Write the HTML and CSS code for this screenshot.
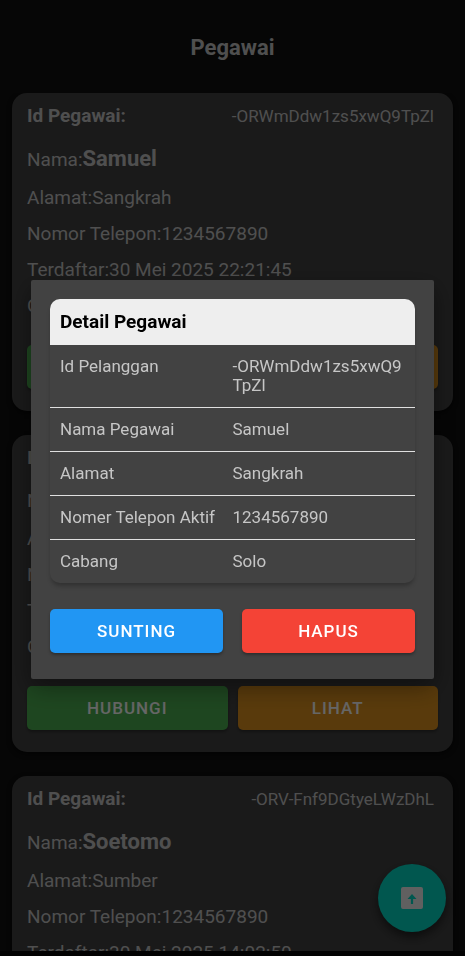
FILE: index.html
```html
<!DOCTYPE html>
<html lang="id">
<head>
<meta charset="utf-8">
<meta name="viewport" content="width=device-width, initial-scale=1">
<title>Pegawai</title>
<link rel="stylesheet" href="styles.css">
</head>
<body>
<div class="app">
  <header class="topbar"><h1 class="topbar-title">Pegawai</h1></header>
  <main class="list">
    <article class="card">
      <div class="card-head"><strong>Id Pegawai:</strong><span class="card-id">-ORWmDdw1zs5xwQ9TpZl</span></div>
      <p class="row row-name">Nama:<strong class="name">Samuel</strong></p>
      <p class="row">Alamat:Sangkrah</p>
      <p class="row">Nomor Telepon:1234567890</p>
      <p class="row">Terdaftar:30 Mei 2025 22:21:45</p>
      <p class="row">Cabang:Solo</p>
      <div class="actions card-actions">
        <button class="btn btn-call" type="button">HUBUNGI</button>
        <button class="btn btn-view" type="button">LIHAT</button>
      </div>
    </article>
    <article class="card">
      <div class="card-head"><strong>Id Pegawai:</strong></div>
      <p class="row row-name">Nama:</p>
      <p class="row">Alamat:</p>
      <p class="row">Nomor Telepon:</p>
      <p class="row">Terdaftar:</p>
      <p class="row">Cabang:</p>
      <div class="actions card-actions">
        <button class="btn btn-call" type="button">HUBUNGI</button>
        <button class="btn btn-view" type="button">LIHAT</button>
      </div>
    </article>
    <article class="card">
      <div class="card-head"><strong>Id Pegawai:</strong><span class="card-id">-ORV-Fnf9DGtyeLWzDhL</span></div>
      <p class="row row-name">Nama:<strong class="name">Soetomo</strong></p>
      <p class="row">Alamat:Sumber</p>
      <p class="row">Nomor Telepon:1234567890</p>
      <p class="row">Terdaftar:30 Mei 2025 14:02:50</p>
    </article>
  </main>
  <div class="navbar"></div>
  <button class="fab" type="button" aria-label="Tambah pegawai">
    <svg class="fab-icon" viewBox="0 0 22 22" aria-hidden="true">
      <path fill="currentColor" fill-rule="evenodd" d="M2 0H20A2 2 0 0 1 22 2V20A2 2 0 0 1 20 22H2A2 2 0 0 1 0 20V2A2 2 0 0 1 2 0ZM11 7L6.500 12H9.900V17H12.100V12H15.500Z"/>
    </svg>
  </button>
</div>
<div class="scrim">
  <section class="dialog" role="dialog" aria-modal="true" aria-labelledby="dialog-title">
    <div class="detail">
      <h2 class="detail-title" id="dialog-title">Detail Pegawai</h2>
      <table class="detail-table">
        <tr><th scope="row">Id Pelanggan</th><td class="code">-ORWmDdw1zs5xwQ9TpZl</td></tr>
        <tr><th scope="row">Nama Pegawai</th><td>Samuel</td></tr>
        <tr><th scope="row">Alamat</th><td>Sangkrah</td></tr>
        <tr><th scope="row">Nomer Telepon Aktif</th><td>1234567890</td></tr>
        <tr><th scope="row">Cabang</th><td>Solo</td></tr>
      </table>
    </div>
    <div class="actions dialog-actions">
      <button class="btn btn-edit" type="button">SUNTING</button>
      <button class="btn btn-delete" type="button">HAPUS</button>
    </div>
  </section>
</div>
</body>
</html>
```
FILE: styles.css
```css
* { box-sizing: border-box; }
body {
  margin: 0;
  background: #0f0f0f;
  color: #c6c6c6;
  font-family: Roboto, "Liberation Sans", sans-serif;
  font-size: 19px;
}
h1, h2, p { margin: 0; }
.app {
  position: relative;
  display: flex;
  flex-direction: column;
  height: 100vh;
}
.topbar {
  flex: none;
  padding: 34px 12px 31px;
  text-align: center;
}
.topbar-title { font-size: 22px; line-height: 28px; font-weight: 700; }
.list {
  flex: 1;
  min-height: 0;
  overflow: hidden;
  padding: 0 12px;
}
.card {
  margin-bottom: 24px;
  padding: 11px 15px 22px;
  border-radius: 15px;
  background: #424242;
  box-shadow: 0 2px 5px rgba(0, 0, 0, 0.6);
}
.card-head {
  display: flex;
  justify-content: space-between;
  align-items: center;
  padding-right: 4px;
  line-height: 24px;
}
.card-id { font-size: 17px; }
.row { margin-top: 12px; line-height: 24px; }
.row-name { margin-top: 17px; line-height: 28px; }
.name { font-size: 22px; }
.actions { display: grid; grid-template-columns: 1fr 1fr; gap: 10px; }
.card-actions { margin-top: 27px; }
.btn {
  height: 44px;
  padding: 0;
  border: 0;
  border-radius: 5px;
  color: #fff;
  font-family: inherit;
  font-size: 17px;
  font-weight: 500;
  letter-spacing: 1px;
  box-shadow: 0 2px 3px rgba(0, 0, 0, 0.3);
}
.btn-call { background: #4caf50; }
.btn-view { background: #de921e; }
.btn-edit { background: #2196f3; }
.btn-delete { background: #f44336; }
.navbar { flex: none; height: 5px; background: #050505; }
.fab {
  position: absolute;
  right: 19px;
  bottom: 24px;
  display: grid;
  place-items: center;
  width: 68px;
  height: 68px;
  padding: 0;
  border: 0;
  border-radius: 50%;
  background: #03dac5;
  color: #f0f0f0;
  box-shadow: 0 5px 10px rgba(0, 0, 0, 0.5);
}
.fab-icon { width: 22px; height: 22px; }
.scrim {
  position: fixed;
  inset: 0;
  display: grid;
  align-items: center;
  padding: 3px 31px 0;
  background: rgba(0, 0, 0, 0.6);
}
.dialog {
  padding: 19px 19px 26px;
  border-radius: 2px;
  background: #424242;
  box-shadow: 0 8px 24px rgba(0, 0, 0, 0.4);
}
.detail {
  overflow: hidden;
  border-radius: 10px;
  box-shadow: 0 4px 4px -1px rgba(0, 0, 0, 0.25);
}
.detail-title {
  padding: 0 10px;
  background: #eee;
  color: #000;
  font-size: 19px;
  line-height: 46px;
  font-weight: 700;
}
.detail-table {
  width: 100%;
  border-spacing: 0;
  table-layout: fixed;
  font-size: 17px;
  line-height: 19px;
}
.detail-table th,
.detail-table td {
  padding: 12px 10px;
  border-bottom: 1px solid #e0e0e0;
  font-weight: 400;
  text-align: left;
  vertical-align: top;
}
.detail-table th { width: 50%; padding-right: 0; }
.detail-table td { padding-left: 0; }
.detail-table .code { word-break: break-all; }
.detail-table tr:last-child > * { border-bottom: 0; }
.dialog-actions { gap: 19px; margin-top: 26px; }
```
